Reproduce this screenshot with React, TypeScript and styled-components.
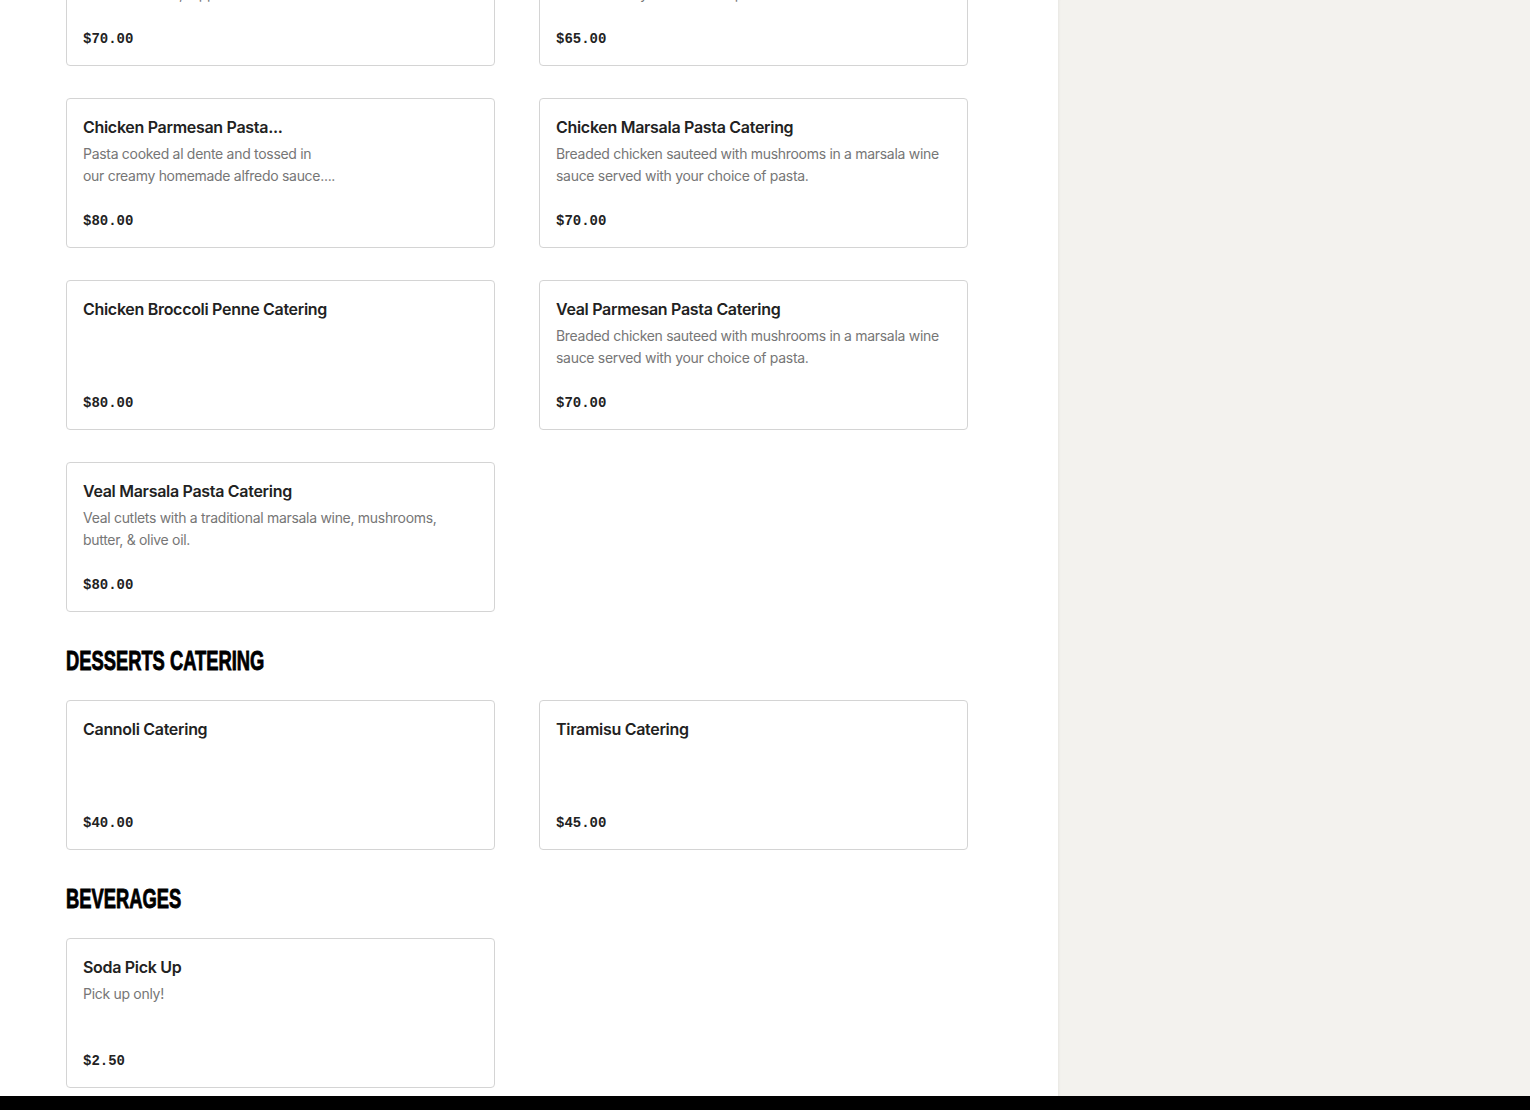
import styled, { createGlobalStyle } from "styled-components";

type Item = {
  name: string;
  desc?: string[];
  price: string;
  narrow?: boolean;
};

type Section = {
  title?: string;
  items: Item[];
};

const sections: Section[] = [
  {
    items: [
      {
        name: "Baked Ziti Pasta Catering",
        desc: ["Ziti pasta baked with our marinara sauce, ricotta", "and mozzarella, topped with basil."],
        price: "$70.00",
      },
      {
        name: "Penne Vodka Pasta Catering",
        desc: ["Penne pasta tossed in a creamy pink vodka sauce", "finished with your choice of pasta."],
        price: "$65.00",
      },
      {
        name: "Chicken Parmesan Pasta...",
        desc: ["Pasta cooked al dente and tossed in", "our creamy homemade alfredo sauce...."],
        price: "$80.00",
        narrow: true,
      },
      {
        name: "Chicken Marsala Pasta Catering",
        desc: ["Breaded chicken sauteed with mushrooms in a marsala wine", "sauce served with your choice of pasta."],
        price: "$70.00",
      },
      { name: "Chicken Broccoli Penne Catering", price: "$80.00" },
      {
        name: "Veal Parmesan Pasta Catering",
        desc: ["Breaded chicken sauteed with mushrooms in a marsala wine", "sauce served with your choice of pasta."],
        price: "$70.00",
      },
      {
        name: "Veal Marsala Pasta Catering",
        desc: ["Veal cutlets with a traditional marsala wine, mushrooms,", "butter, & olive oil."],
        price: "$80.00",
      },
    ],
  },
  {
    title: "DESSERTS CATERING",
    items: [
      { name: "Cannoli Catering", price: "$40.00" },
      { name: "Tiramisu Catering", price: "$45.00" },
    ],
  },
  {
    title: "BEVERAGES",
    items: [{ name: "Soda Pick Up", desc: ["Pick up only!"], price: "$2.50" }],
  },
];

const GlobalStyle = createGlobalStyle`
  * { box-sizing: border-box; }
  html, body { margin: 0; padding: 0; overflow: hidden; }
  body {
    font-family: Inter, "Noto Sans", "Liberation Sans", sans-serif;
    background: #fff;
  }
`;

const App = () => {
  return (
    <>
      <GlobalStyle />
      <Page>
        <Body>
          <Main>
            <Scrolled>
              {sections.map((section, i) => (
                <MenuSection key={i}>
                  {section.title && (
                    <SectionTitle>
                      <span>{section.title}</span>
                    </SectionTitle>
                  )}
                  <CardGrid>
                    {section.items.map((item) => (
                      <Card key={item.name}>
                        <ItemName>{item.name}</ItemName>
                        {item.desc && (
                          <ItemDesc $narrow={item.narrow}>
                            {item.desc.map((line) => (
                              <span key={line}>{line}</span>
                            ))}
                          </ItemDesc>
                        )}
                        <Price>{item.price}</Price>
                      </Card>
                    ))}
                  </CardGrid>
                </MenuSection>
              ))}
            </Scrolled>
          </Main>
          <Aside />
        </Body>
        <Footer />
      </Page>
    </>
  );
};

const Page = styled.div`
  height: 100vh;
  display: grid;
  grid-template-rows: 1096px 1fr;
  overflow: hidden;
`;

const Body = styled.div`
  display: flex;
  overflow: hidden;
`;

const Main = styled.main`
  width: 1058px;
  flex-shrink: 0;
  background: #fff;
  padding: 0 66px;
  overflow: hidden;
`;

/* the page is scrolled down a bit in the shot */
const Scrolled = styled.div`
  margin-top: -84px;
`;

const MenuSection = styled.section``;

const SectionTitle = styled.h2`
  margin: 32px 0 20px;
  height: 36px;
  font-family: "Liberation Sans", Arial, sans-serif;
  font-weight: 700;
  font-size: 28px;
  line-height: 34px;
  color: #000;
  white-space: nowrap;

  /* no condensed face installed, so squeeze a bold sans */
  span {
    display: inline-block;
    transform: scaleX(0.655);
    transform-origin: left center;
    -webkit-text-stroke: 0.9px #000;
  }
`;

const CardGrid = styled.div`
  display: grid;
  grid-template-columns: 429px 429px;
  column-gap: 44px;
  row-gap: 32px;
`;

const Card = styled.div`
  height: 150px;
  border: 1px solid #d4d4d4;
  border-radius: 4px;
  padding: 16px;
  display: flex;
  flex-direction: column;
  background: #fff;
`;

const ItemName = styled.div`
  font-size: 16px;
  font-weight: 600;
  letter-spacing: -0.3px;
  line-height: 24px;
  color: #222;
  white-space: nowrap;
`;

const ItemDesc = styled.p<{ $narrow?: boolean }>`
  margin: 4px 0 0;
  font-size: 14px;
  letter-spacing: -0.3px;
  line-height: 22px;
  color: #767676;
  max-width: ${(p) => (p.$narrow ? "260px" : "none")};

  span {
    display: block;
    white-space: nowrap;
  }
`;

const Price = styled.div`
  margin-top: auto;
  font-family: "Liberation Mono", "DejaVu Sans Mono", monospace;
  font-size: 14px;
  font-weight: 700;
  line-height: 20px;
  color: #222;
`;

const Aside = styled.aside`
  flex: 1;
  background: #f3f2ee;
  box-shadow: inset 3px 0 3px -2px rgba(0, 0, 0, 0.05);
`;

const Footer = styled.footer`
  background: #000;
`;

export default App;
